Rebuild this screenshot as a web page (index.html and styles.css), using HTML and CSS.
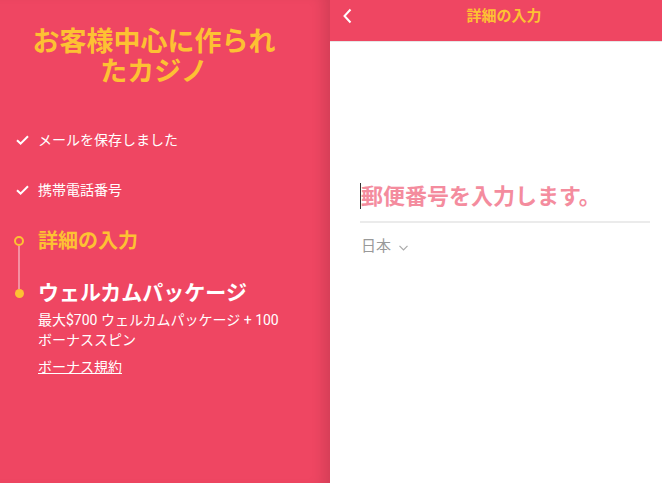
FILE: index.html
```html
<!DOCTYPE html>
<html lang="ja">
<head>
    <meta charset="UTF-8">
    <meta name="viewport" content="width=device-width, initial-scale=1.0">
    <title>詳細の入力</title>
    <link rel="stylesheet" href="styles.css">
</head>
<body>
    <div class="layout">
        <aside class="sidebar">
            <h1 class="brand">お客様中心に作られたカジノ</h1>

            <ol class="steps">
                <li class="step step-done">
                    <div class="marker">
                        <svg class="check" width="13" height="10" viewBox="0 0 13 10">
                            <path d="M1 5.2 L4.6 8.6 L12 1.2" fill="none" stroke="#fff" stroke-width="2"/>
                        </svg>
                    </div>
                    <div class="step-body">メールを保存しました</div>
                </li>
                <li class="step step-done">
                    <div class="marker">
                        <svg class="check" width="13" height="10" viewBox="0 0 13 10">
                            <path d="M1 5.2 L4.6 8.6 L12 1.2" fill="none" stroke="#fff" stroke-width="2"/>
                        </svg>
                    </div>
                    <div class="step-body">携帯電話番号</div>
                </li>
                <li class="step step-current">
                    <div class="marker">
                        <span class="ring"></span>
                        <span class="rail"></span>
                    </div>
                    <div class="step-body">詳細の入力</div>
                </li>
                <li class="step step-bonus">
                    <div class="marker">
                        <span class="rail"></span>
                        <span class="dot"></span>
                    </div>
                    <div class="step-body">
                        <div class="bonus-title">ウェルカムパッケージ</div>
                        <p class="bonus-text">最大$700 ウェルカムパッケージ + 100 ボーナススピン</p>
                        <a href="#" class="bonus-link">ボーナス規約</a>
                    </div>
                </li>
            </ol>
        </aside>

        <main class="panel">
            <header class="panel-header">
                <button class="back" aria-label="戻る">
                    <svg width="10" height="16" viewBox="0 0 10 16">
                        <path d="M8.5 1.5 L2.5 8 L8.5 14.5" fill="none" stroke="#fff" stroke-width="2"/>
                    </svg>
                </button>
                <div class="panel-title">詳細の入力</div>
            </header>

            <form class="details-form">
                <div class="field">
                    <span class="caret"></span>
                    <input type="text" class="field-input" placeholder="郵便番号を入力します。">
                </div>
                <div class="country">
                    日本
                    <svg class="country-arrow" width="9" height="6" viewBox="0 0 9 6">
                        <path d="M0.5 0.8 L4.5 4.8 L8.5 0.8" fill="none" stroke="#aaa" stroke-width="1.2"/>
                    </svg>
                </div>
            </form>
        </main>
    </div>
</body>
</html>
```

FILE: styles.css
```css
:root {
    --brand-pink: #ef4662;
    --brand-yellow: #fdc133;
    --rail: #f58fa1;
}

body {
    margin: 0;
    font-family: Roboto, "Noto Sans CJK JP", sans-serif;
    background: #fff;
}

.layout {
    display: flex;
    height: 483px;
    overflow: hidden;
}

/* left column */
.sidebar {
    width: 330px;
    flex-shrink: 0;
    background-color: var(--brand-pink);
    box-shadow: inset -14px 0 14px -8px rgba(0, 0, 0, 0.12);
    color: #fff;
}

.brand {
    margin: 0;
    padding: 27px 50px 0 28px;
    font-size: 27px;
    line-height: 30px;
    font-weight: 700;
    text-align: center;
    color: var(--brand-yellow);
}

.steps {
    list-style: none;
    margin: 28px 0 0 0;
    padding: 0;
}

.step {
    display: flex;
}

.marker {
    width: 38px;
    flex-shrink: 0;
    display: flex;
    flex-direction: column;
}

.step-done {
    height: 50px;
    align-items: center;
    font-size: 14px;
    line-height: 20px;
}

.check {
    margin-left: 16px;
}

.step-current {
    height: 52px;
    color: var(--brand-yellow);
    font-size: 20px;
    font-weight: 700;
    line-height: 26px;
}

.step-current .step-body {
    padding-top: 13px;
}

.ring {
    width: 10px;
    height: 10px;
    box-sizing: border-box;
    margin: 21px 0 0 14px;
    border: 2px solid var(--brand-yellow);
    border-radius: 50%;
}

.rail {
    flex: 1;
    width: 2px;
    margin-left: 18px;
    background-color: var(--rail);
}

.step-bonus .rail {
    flex: none;
    height: 22px;
}

.dot {
    width: 9px;
    height: 9px;
    margin-left: 14.5px;
    border-radius: 50%;
    background-color: var(--brand-yellow);
}

.step-bonus .step-body {
    padding-top: 13px;
}

.bonus-title {
    font-size: 21px;
    font-weight: 700;
    line-height: 26px;
}

.bonus-text {
    margin: 4px 0 0 0;
    width: 250px;
    font-size: 14px;
    line-height: 20px;
}

.bonus-link {
    display: inline-block;
    margin-top: 7px;
    color: #fff;
    font-size: 14px;
    line-height: 20px;
    text-decoration: underline;
}

/* right column */
.panel {
    flex: 1;
    background: #fff;
}

.panel-header {
    position: relative;
    height: 41px;
    background-color: var(--brand-pink);
    border-bottom: 1px solid #e6e6e6;
}

.back {
    position: absolute;
    left: 12px;
    top: 8px;
    padding: 0;
    border: none;
    background: none;
    cursor: pointer;
}

.panel-title {
    padding: 6px 0 0 16px;
    text-align: center;
    font-size: 15px;
    font-weight: 700;
    line-height: 20px;
    color: var(--brand-yellow);
}

.details-form {
    padding: 141px 12px 0 30px;
}

.field {
    position: relative;
}

.caret {
    position: absolute;
    left: 0;
    top: 0;
    width: 1px;
    height: 26px;
    background-color: #333;
}

.field-input {
    display: block;
    width: 100%;
    box-sizing: border-box;
    height: 40px;
    margin: 0;
    padding: 0 0 12px 1px;
    border: none;
    border-bottom: 2px solid #ebebeb;
    outline: none;
    font-family: inherit;
    font-size: 22px;
    font-weight: 700;
    line-height: 26px;
}

.field-input::placeholder {
    color: #f48c9e;
    opacity: 1;
}

.country {
    display: flex;
    align-items: center;
    gap: 8px;
    margin-top: 13px;
    padding-left: 1px;
    font-size: 15px;
    line-height: 20px;
    color: #999;
}

.country-arrow {
    margin-top: 3px;
}
```
